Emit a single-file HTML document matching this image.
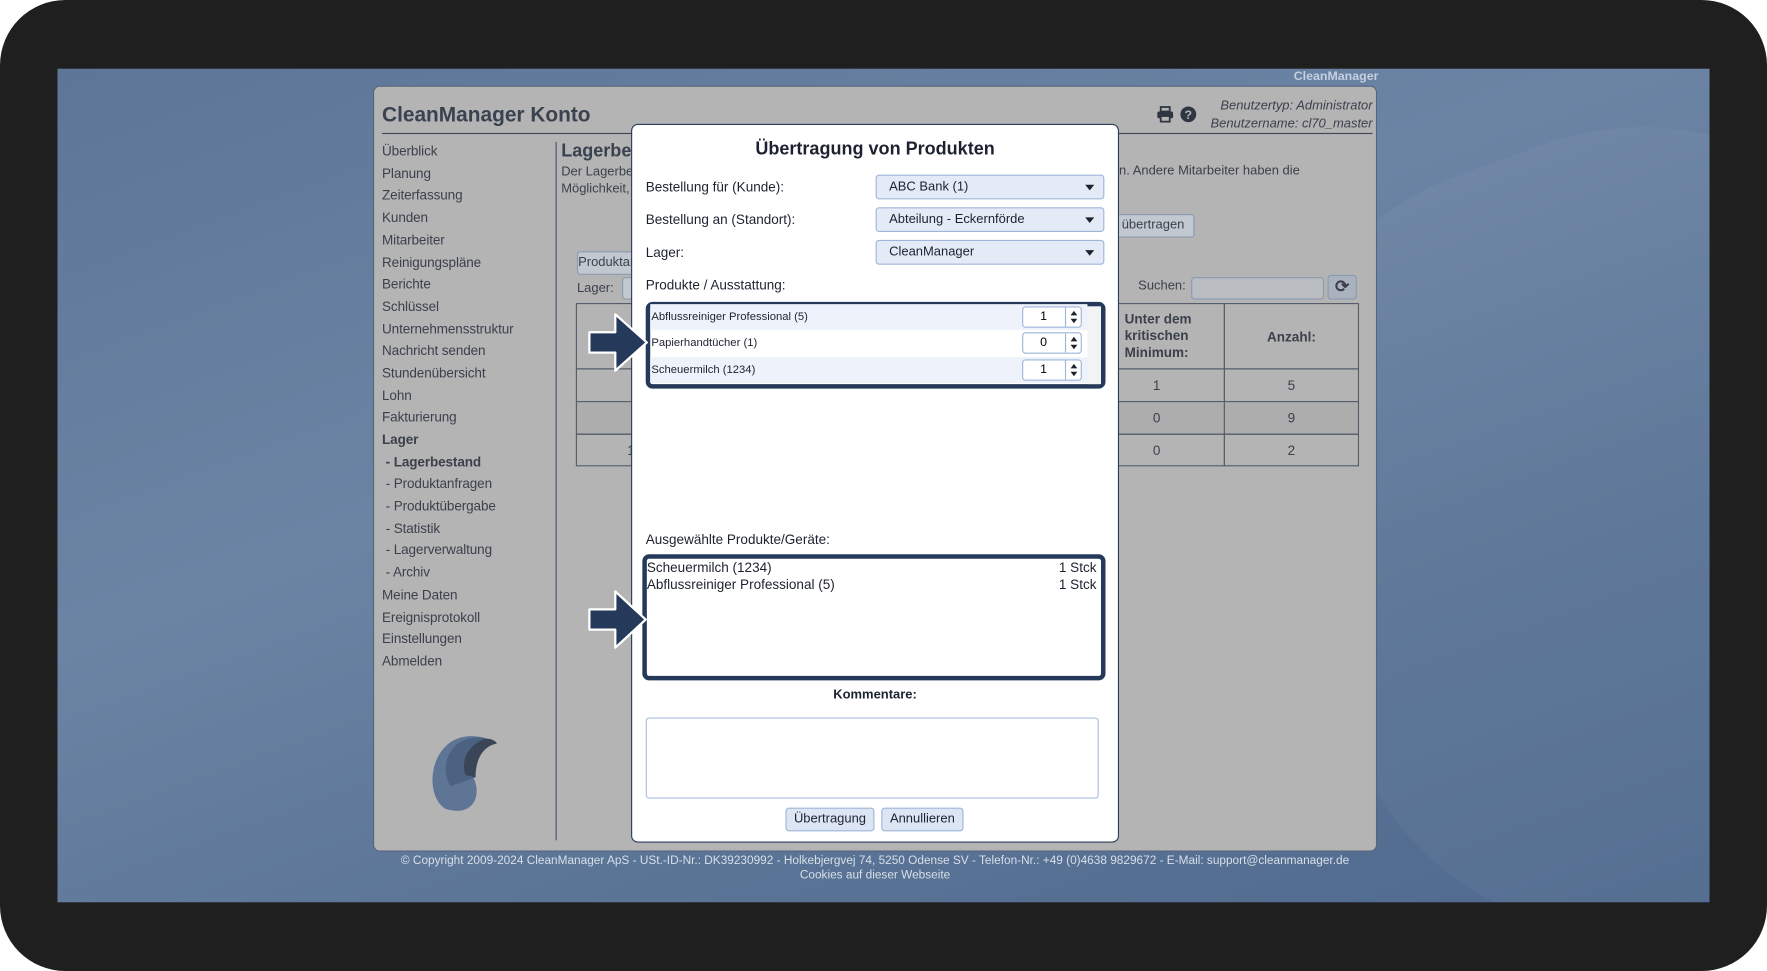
<!DOCTYPE html>
<html><head><meta charset="utf-8"><style>
html,body{margin:0;padding:0;width:1767px;height:971px;overflow:hidden;background:#fff;font-family:"Liberation Sans",Arial,sans-serif}
#w{position:absolute;left:0;top:0;width:1568px;height:862px;transform:scale(1.12691,1.12645);transform-origin:0 0}
.a{position:absolute}
#frame{left:0;top:0;width:1568px;height:862px;background:#1f1f1f;border-radius:58px}
#scr{left:51px;top:61px;width:1466px;height:740px;background:linear-gradient(160deg,#5d7698 0%,#6c84a4 40%,#5b7597 70%,#4f6a8f 100%);overflow:hidden}
#panel{left:331px;top:76px;width:891px;height:680px;background:#b4b4b4;border-radius:6px;border:1px solid #56657c;box-sizing:border-box}
.nav{position:absolute;left:339px;font-size:12px;color:#3b404b;letter-spacing:-0.1px}
.t{position:absolute;font-size:11.5px;color:#3b404b;white-space:nowrap}
.td{position:absolute;border:1px solid #555d6b;box-sizing:border-box;font-size:12px;color:#3b404b;display:flex;align-items:center;justify-content:center;text-align:center}
#modal{left:560px;top:110px;width:433px;height:638px;background:#fff;border:1px solid #2b3d58;border-radius:6px;box-sizing:border-box}
.lbl{position:absolute;left:573px;font-size:12px;color:#1d2230}
.sel{position:absolute;left:777px;width:203px;height:22px;background:#e4ebf6;border:1px solid #9fb6d8;border-radius:3px;box-sizing:border-box;font-size:11.5px;color:#1d2230;padding:4px 0 0 11px}
.sel:after{content:"";position:absolute;right:8px;top:8px;border-left:4px solid transparent;border-right:4px solid transparent;border-top:5px solid #1d2230}
.row{position:absolute;left:577px;width:388px;height:23px;font-size:10px;color:#1d2230;padding:6px 0 0 1px;box-sizing:border-box}
.num{position:absolute;left:907px;width:53px;height:19px;border:1px solid #9fb6d8;border-radius:3px;background:#fff;box-sizing:border-box;font-size:11px}
.num span{position:absolute;left:15px;top:2px}
.num i{position:absolute;left:37px;top:0;width:15px;height:17px;border-left:1px solid #9fb6d8}
.num i:before{content:"";position:absolute;left:4px;top:3px;border-left:3.5px solid transparent;border-right:3.5px solid transparent;border-bottom:4px solid #1d2230}
.num i:after{content:"";position:absolute;left:4px;top:10px;border-left:3.5px solid transparent;border-right:3.5px solid transparent;border-top:4px solid #1d2230}
.btn{position:absolute;height:21px;background:#dbe5f3;border:1px solid #9fb6d8;border-radius:3px;box-sizing:border-box;font-size:11.5px;color:#1d2230;text-align:center;padding-top:3px;white-space:nowrap;overflow:hidden}
</style></head><body><div id="w">
<div class="a" id="frame"></div>
<div class="a" id="scr"><div class="a" style="left:1100px;top:60px;width:600px;height:700px;border-radius:260px;background:rgba(255,255,255,0.035);transform:rotate(-20deg)"></div></div>
<div class="a" style="left:1148px;top:62px;font-size:11px;font-weight:bold;color:#c5d0df">CleanManager</div>
<div class="a" id="panel"></div>
<div class="a" style="left:339px;top:91px;font-size:18.5px;font-weight:bold;color:#3a4250">CleanManager Konto</div>
<div class="a" style="left:339px;top:118px;width:879px;height:1px;background:#3e4757"></div>
<div class="a" style="left:1030px;top:86px;font-size:11.5px;font-style:italic;color:#3b404b;text-align:right;width:188px;line-height:16px">Benutzertyp: Administrator<br>Benutzername: cl70_master</div>
<svg class="a" style="left:1026px;top:94px" width="16" height="15" viewBox="0 0 16 15"><rect x="4" y="1" width="8" height="4" fill="none" stroke="#2f3642" stroke-width="1.6"/><rect x="1" y="5" width="14" height="6" rx="1.5" fill="#2f3642"/><rect x="4" y="9" width="8" height="5" fill="#b4b4b4" stroke="#2f3642" stroke-width="1.6"/></svg>
<svg class="a" style="left:1047px;top:94px" width="15" height="15" viewBox="0 0 15 15"><circle cx="7.5" cy="7.5" r="7" fill="#2f3642"/><text x="7.5" y="11.5" font-size="11" font-weight="bold" fill="#b4b4b4" text-anchor="middle" font-family="Liberation Sans">?</text></svg>
<div class="nav" style="top:127px">Überblick</div><div class="nav" style="top:147px">Planung</div><div class="nav" style="top:166px">Zeiterfassung</div><div class="nav" style="top:186px">Kunden</div><div class="nav" style="top:206px">Mitarbeiter</div><div class="nav" style="top:226px">Reinigungspläne</div><div class="nav" style="top:245px">Berichte</div><div class="nav" style="top:265px">Schlüssel</div><div class="nav" style="top:285px">Unternehmensstruktur</div><div class="nav" style="top:304px">Nachricht senden</div><div class="nav" style="top:324px">Stundenübersicht</div><div class="nav" style="top:344px">Lohn</div><div class="nav" style="top:363px">Fakturierung</div><div class="nav" style="top:383px;font-weight:bold">Lager</div><div class="nav" style="top:403px;font-weight:bold">&nbsp;- Lagerbestand</div><div class="nav" style="top:422px">&nbsp;- Produktanfragen</div><div class="nav" style="top:442px">&nbsp;- Produktübergabe</div><div class="nav" style="top:462px">&nbsp;- Statistik</div><div class="nav" style="top:481px">&nbsp;- Lagerverwaltung</div><div class="nav" style="top:501px">&nbsp;- Archiv</div><div class="nav" style="top:521px">Meine Daten</div><div class="nav" style="top:541px">Ereignisprotokoll</div><div class="nav" style="top:560px">Einstellungen</div><div class="nav" style="top:580px">Abmelden</div>
<svg class="a" style="left:380px;top:648px" width="66" height="80" viewBox="0 0 66 80"><path d="M15 70 C0 60 0 30 15 15 C25 4 45 2 60 12 C45 14 33 25 40 42 C48 58 40 78 15 70Z" fill="#5f7596"/><path d="M20 50 C10 35 18 15 30 10 C45 3 55 8 60 12 C47 14 37 26 42 42Z" fill="#4c6282"/><path d="M33 40 C28 25 38 12 50 8 C56 7 60 10 61 12 C50 14 42 24 42 42Z" fill="#3a4658"/></svg>
<div class="a" style="left:493px;top:126px;width:1px;height:620px;background:#4a5466"></div>
<div class="a" style="left:498px;top:126px;font-size:16px;font-weight:bold;color:#3a4250">Lagerbestand</div>
<div class="t" style="left:498px;top:146px;line-height:15px">Der Lagerbestand<br>Möglichkeit,</div>
<div class="t" style="left:993px;top:146px">n. Andere Mitarbeiter haben die</div>
<div class="btn" style="left:512px;top:223px;width:60px;background:#c2c8d0;border-color:#8a9ab0;color:#3b404b">Produktanfr</div>
<div class="btn" style="left:980px;top:190px;width:80px;background:#c2c8d0;border-color:#8a9ab0;color:#3b404b;text-align:right;padding-right:8px">t übertragen</div>
<div class="t" style="left:512px;top:250px">Lager:</div>
<div class="a" style="left:552px;top:246px;width:20px;height:20px;border:1px solid #8a9ab0;border-radius:3px;background:#c2c8d0;box-sizing:border-box"></div>
<div class="t" style="left:1010px;top:248px">Suchen:</div>
<div class="a" style="left:1057px;top:246px;width:118px;height:20px;border:1px solid #8a9ab0;border-radius:3px;box-sizing:border-box;background:#b9bcc1"></div>
<div class="a" style="left:1178px;top:244px;width:26px;height:22px;border:1px solid #8a9ab0;border-radius:3px;box-sizing:border-box;background:#aab2bd;font-size:15px;font-weight:bold;color:#3b404b;text-align:center;line-height:20px">⟳</div>
<div class="td" style="left:511px;top:269px;width:60px;height:59px;font-weight:bold;justify-content:flex-end;padding-right:16px">A</div>
<div class="td" style="left:511px;top:327px;width:60px;height:30px;justify-content:flex-end;padding-right:0">5</div>
<div class="td" style="left:511px;top:356px;width:60px;height:30px;background:#adadad;justify-content:flex-end;padding-right:0">1</div>
<div class="td" style="left:511px;top:385px;width:60px;height:29px;justify-content:flex-end;padding-right:0">12</div>
<div class="td" style="left:992px;top:269px;width:95px;height:59px;font-weight:bold;justify-content:flex-start;text-align:left;padding-left:5px;line-height:15px">Unter dem<br>kritischen<br>Minimum:</div>
<div class="td" style="left:1086px;top:269px;width:120px;height:59px;font-weight:bold">Anzahl:</div>
<div class="td" style="left:992px;top:327px;width:95px;height:30px;justify-content:flex-start;padding-left:30px">1</div><div class="td" style="left:1086px;top:327px;width:120px;height:30px">5</div>
<div class="td" style="left:992px;top:356px;width:95px;height:30px;justify-content:flex-start;padding-left:30px;background:#adadad">0</div><div class="td" style="left:1086px;top:356px;width:120px;height:30px;background:#adadad">9</div>
<div class="td" style="left:992px;top:385px;width:95px;height:29px;justify-content:flex-start;padding-left:30px">0</div><div class="td" style="left:1086px;top:385px;width:120px;height:29px">2</div>
<div class="a" style="left:331px;top:758px;width:891px;text-align:center;font-size:10.5px;color:#d9dfe8;line-height:13px;white-space:nowrap">© Copyright 2009-2024 CleanManager ApS - USt.-ID-Nr.: DK39230992 - Holkebjergvej 74, 5250 Odense SV - Telefon-Nr.: +49 (0)4638 9829672 - E-Mail: support@cleanmanager.de<br>Cookies auf dieser Webseite</div>

<div class="a" id="modal"></div>
<div class="a" style="left:560px;top:124px;width:433px;text-align:center;font-size:16px;font-weight:bold;color:#1d2230">Übertragung von Produkten</div>
<div class="lbl" style="top:159px">Bestellung für (Kunde):</div><div class="sel" style="top:155px">ABC Bank (1)</div>
<div class="lbl" style="top:188px">Bestellung an (Standort):</div><div class="sel" style="top:184px">Abteilung - Eckernförde</div>
<div class="lbl" style="top:217px">Lager:</div><div class="sel" style="top:213px">CleanManager</div>
<div class="lbl" style="top:246px">Produkte / Ausstattung:</div>
<div class="a" style="left:573px;top:268px;width:408px;height:77px;border:4px solid #253a5a;border-radius:6px;box-sizing:border-box;background:#fff"></div>
<div class="a" style="left:965px;top:272px;width:12px;height:69px;background:#f3f3f3"></div>
<div class="row" style="top:270px;background:#eef3fb">Abflussreiniger Professional (5)</div>
<div class="row" style="top:293px">Papierhandtücher (1)</div>
<div class="row" style="top:317px;background:#eef3fb">Scheuermilch (1234)</div>
<div class="num" style="top:272px"><span>1</span><i></i></div>
<div class="num" style="top:295px"><span>0</span><i></i></div>
<div class="num" style="top:319px"><span>1</span><i></i></div>
<div class="lbl" style="top:472px">Ausgewählte Produkte/Geräte:</div>
<div class="a" style="left:570px;top:492px;width:411px;height:112px;border:4px solid #253a5a;border-radius:6px;box-sizing:border-box;background:#fff"></div>
<div class="a" style="left:574px;top:497px;width:399px;font-size:12px;color:#1d2230;line-height:15px">Scheuermilch (1234)<span style="float:right">1 Stck</span><br>Abflussreiniger Professional (5)<span style="float:right">1 Stck</span></div>
<div class="a" style="left:560px;top:611px;width:433px;text-align:center;font-size:11.5px;font-weight:bold;color:#1d2230">Kommentare:</div>
<div class="a" style="left:573px;top:637px;width:402px;height:72px;border:1px solid #a9bfe0;border-radius:3px;box-sizing:border-box"></div>
<div class="btn" style="left:697px;top:717px;width:79px">Übertragung</div>
<div class="btn" style="left:782px;top:717px;width:73px">Annullieren</div>
<svg class="a" style="left:520px;top:276px" width="58" height="56" viewBox="0 0 58 56"><path d="M3 19 H26 V3 L54 28 L26 53 V37 H3 Z" fill="#253a5a" stroke="#fff" stroke-width="2" stroke-linejoin="round"/></svg>
<svg class="a" style="left:520px;top:523px" width="58" height="54" viewBox="0 0 58 54"><path d="M3 18 H26 V2 L53 27 L26 52 V36 H3 Z" fill="#253a5a" stroke="#fff" stroke-width="2" stroke-linejoin="round"/></svg>
</div></body></html>
